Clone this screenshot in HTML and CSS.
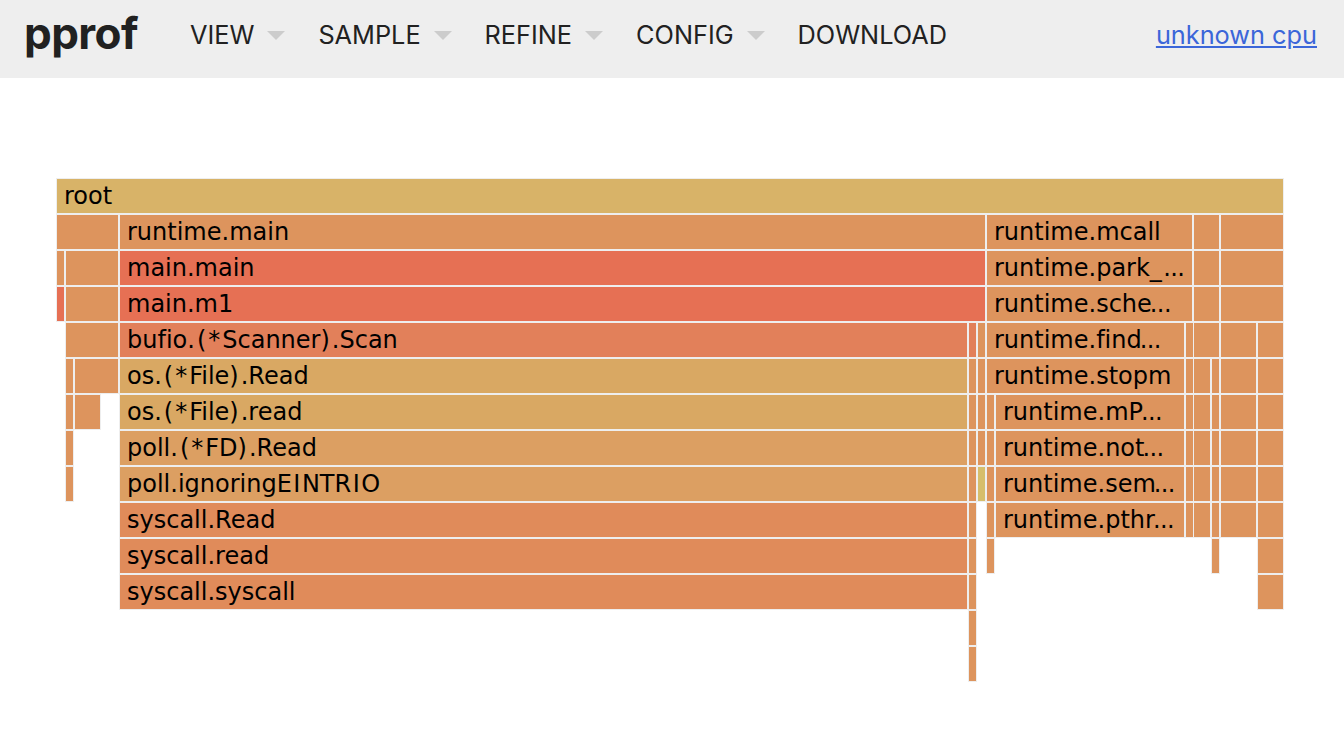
FILE: index.html
```html
<!DOCTYPE html>
<html lang="en">
<head>
<meta charset="utf-8">
<title>pprof</title>
<link rel="stylesheet" href="styles.css">
</head>
<body>
<header class="header">
  <div class="logo">pprof</div>
  <nav class="menu">
    <span class="item item-view">VIEW<i class="caret"></i></span>
    <span class="item item-sample">SAMPLE<i class="caret"></i></span>
    <span class="item item-refine">REFINE<i class="caret"></i></span>
    <span class="item item-config">CONFIG<i class="caret"></i></span>
    <span class="item">DOWNLOAD</span>
  </nav>
  <a class="profile" href="#">unknown cpu</a>
</header>
<main class="flame">
  <div class="row">
    <div class="f root" style="left:0;width:1228px">root</div>
  </div>
  <div class="row">
    <div class="f o" style="left:0;width:63px"></div>
    <div class="f o" style="left:63px;width:867px">runtime.main</div>
    <div class="f o" style="left:930px;width:207px">runtime.mcall</div>
    <div class="f o" style="left:1137px;width:27px"></div>
    <div class="f o" style="left:1164px;width:64px"></div>
  </div>
  <div class="row">
    <div class="f o" style="left:0;width:9px"></div>
    <div class="f o" style="left:9px;width:54px"></div>
    <div class="f red" style="left:63px;width:867px">main.main</div>
    <div class="f o" style="left:930px;width:207px">runtime.park<span class="u">_</span><span class="e">...</span></div>
    <div class="f o" style="left:1137px;width:27px"></div>
    <div class="f o" style="left:1164px;width:64px"></div>
  </div>
  <div class="row">
    <div class="f red" style="left:0;width:9px"></div>
    <div class="f o" style="left:9px;width:54px"></div>
    <div class="f red" style="left:63px;width:867px">main.m1</div>
    <div class="f o" style="left:930px;width:207px">runtime.sche<span class="e">...</span></div>
    <div class="f o" style="left:1137px;width:27px"></div>
    <div class="f o" style="left:1164px;width:64px"></div>
  </div>
  <div class="row">
    <div class="f o" style="left:9px;width:54px"></div>
    <div class="f coral" style="left:63px;width:849px">bufio<span class="w">.(*</span>Scanner<span class="w">)</span>.Scan</div>
    <div class="f coral" style="left:912px;width:9px"></div>
    <div class="f o" style="left:921px;width:9px"></div>
    <div class="f o" style="left:930px;width:199px">runtime.find<span class="e">...</span></div>
    <div class="f o" style="left:1129px;width:8px"></div>
    <div class="f o" style="left:1137px;width:27px"></div>
    <div class="f o" style="left:1164px;width:37px"></div>
    <div class="f o" style="left:1201px;width:27px"></div>
  </div>
  <div class="row">
    <div class="f o" style="left:9px;width:9px"></div>
    <div class="f o" style="left:18px;width:45px"></div>
    <div class="f gold" style="left:63px;width:849px">os<span class="w">.(*</span>File<span class="w">)</span>.Read</div>
    <div class="f o" style="left:912px;width:9px"></div>
    <div class="f o" style="left:921px;width:9px"></div>
    <div class="f o" style="left:930px;width:199px">runtime.stopm</div>
    <div class="f o" style="left:1129px;width:8px"></div>
    <div class="f o" style="left:1137px;width:18px"></div>
    <div class="f o" style="left:1155px;width:9px"></div>
    <div class="f o" style="left:1164px;width:37px"></div>
    <div class="f o" style="left:1201px;width:27px"></div>
  </div>
  <div class="row">
    <div class="f o" style="left:9px;width:9px"></div>
    <div class="f o" style="left:18px;width:27px"></div>
    <div class="f gold" style="left:63px;width:849px">os<span class="w">.(*</span>File<span class="w">)</span>.read</div>
    <div class="f o" style="left:912px;width:9px"></div>
    <div class="f o" style="left:921px;width:9px"></div>
    <div class="f o" style="left:930px;width:9px"></div>
    <div class="f o" style="left:939px;width:190px">runtime.mP<span class="e">...</span></div>
    <div class="f o" style="left:1129px;width:8px"></div>
    <div class="f o" style="left:1137px;width:18px"></div>
    <div class="f o" style="left:1155px;width:9px"></div>
    <div class="f o" style="left:1164px;width:37px"></div>
    <div class="f o" style="left:1201px;width:27px"></div>
  </div>
  <div class="row">
    <div class="f o" style="left:9px;width:9px"></div>
    <div class="f sand" style="left:63px;width:849px">poll<span class="w">.(*</span>FD<span class="w">)</span>.Read</div>
    <div class="f o" style="left:912px;width:9px"></div>
    <div class="f o" style="left:921px;width:9px"></div>
    <div class="f o" style="left:930px;width:9px"></div>
    <div class="f o" style="left:939px;width:190px">runtime.not<span class="e">...</span></div>
    <div class="f o" style="left:1129px;width:8px"></div>
    <div class="f o" style="left:1137px;width:18px"></div>
    <div class="f o" style="left:1155px;width:9px"></div>
    <div class="f o" style="left:1164px;width:37px"></div>
    <div class="f o" style="left:1201px;width:27px"></div>
  </div>
  <div class="row">
    <div class="f o" style="left:9px;width:9px"></div>
    <div class="f sand" style="left:63px;width:849px">poll.ignoringE<span class="i">I</span>NTR<span class="i">I</span>O</div>
    <div class="f o" style="left:912px;width:9px"></div>
    <div class="f yellow" style="left:921px;width:9px"></div>
    <div class="f o" style="left:930px;width:9px"></div>
    <div class="f o" style="left:939px;width:190px">runtime.sem<span class="e">...</span></div>
    <div class="f o" style="left:1129px;width:8px"></div>
    <div class="f o" style="left:1137px;width:18px"></div>
    <div class="f o" style="left:1155px;width:9px"></div>
    <div class="f o" style="left:1164px;width:37px"></div>
    <div class="f o" style="left:1201px;width:27px"></div>
  </div>
  <div class="row">
    <div class="f sys" style="left:63px;width:849px">syscall.Read</div>
    <div class="f o" style="left:912px;width:9px"></div>
    <div class="f o" style="left:930px;width:9px"></div>
    <div class="f o" style="left:939px;width:190px">runtime.pthr<span class="e">...</span></div>
    <div class="f o" style="left:1129px;width:8px"></div>
    <div class="f o" style="left:1137px;width:18px"></div>
    <div class="f o" style="left:1155px;width:9px"></div>
    <div class="f o" style="left:1164px;width:37px"></div>
    <div class="f o" style="left:1201px;width:27px"></div>
  </div>
  <div class="row">
    <div class="f sys" style="left:63px;width:849px">syscall.read</div>
    <div class="f o" style="left:912px;width:9px"></div>
    <div class="f o" style="left:930px;width:9px"></div>
    <div class="f o" style="left:1155px;width:9px"></div>
    <div class="f o" style="left:1201px;width:27px"></div>
  </div>
  <div class="row">
    <div class="f sys" style="left:63px;width:849px">syscall.syscall</div>
    <div class="f o" style="left:912px;width:9px"></div>
    <div class="f o" style="left:1201px;width:27px"></div>
  </div>
  <div class="row">
    <div class="f o" style="left:912px;width:9px"></div>
  </div>
  <div class="row">
    <div class="f o" style="left:912px;width:9px"></div>
  </div>
</main>
</body>
</html>
```
FILE: styles.css
```css
html, body {
  margin: 0;
  padding: 0;
  background: #fff;
}
body {
  width: 1344px;
  height: 734px;
  overflow: hidden;
}
.header {
  display: flex;
  align-items: center;
  height: 78px;
  padding: 0 27px 8px 24px;
  box-sizing: border-box;
  background: #eee;
  font-family: Inter, Roboto, "Liberation Sans", sans-serif;
  color: #212121;
}
.logo {
  font-size: 44px;
  font-weight: 700;
  letter-spacing: -0.6px;
  line-height: 44px;
  width: 166px;
  margin-top: -5px;
}
.menu {
  display: flex;
  align-items: center;
  flex: 1;
}
.item {
  display: flex;
  align-items: center;
  font-size: 25.3px;
  line-height: 30px;
}
.item-view { margin-right: 33px; }
.item-sample { margin-right: 33px; }
.item-refine { margin-right: 33px; }
.item-config { margin-right: 33px; }
.caret {
  width: 0;
  height: 0;
  margin-left: 13px;
  border-style: solid;
  border-width: 9px 9px 0;
  border-color: #ccc transparent transparent;
}
.profile {
  font-size: 25.3px;
  line-height: 30px;
  color: #3b66d9;
  text-decoration: underline;
}
.flame {
  margin: 100px 0 0 56px;
  width: 1228px;
}
.row {
  position: relative;
  height: 36px;
}
.f {
  position: absolute;
  top: 0;
  height: 36px;
  box-sizing: border-box;
  border: 1px solid #eee;
  padding-left: 7px;
  overflow: hidden;
  white-space: nowrap;
  font-family: "DejaVu Sans", sans-serif;
  font-variant-ligatures: none;
  font-size: 24px;
  line-height: 35px;
  color: #000;
}
.w { letter-spacing: 2px; }
.i { margin: 0 1.5px; }
.u { letter-spacing: 3.3px; }
.e {
  margin-left: -2px;
  letter-spacing: -0.6px;
}
.root { background: #d8b368; }
.o { background: #dd945d; }
.red { background: #e67054; }
.coral { background: #e2805a; }
.gold { background: #d9a863; }
.sand { background: #dc9f62; }
.sys { background: #e08b5a; }
.yellow { background: #d6be6b; }
```
